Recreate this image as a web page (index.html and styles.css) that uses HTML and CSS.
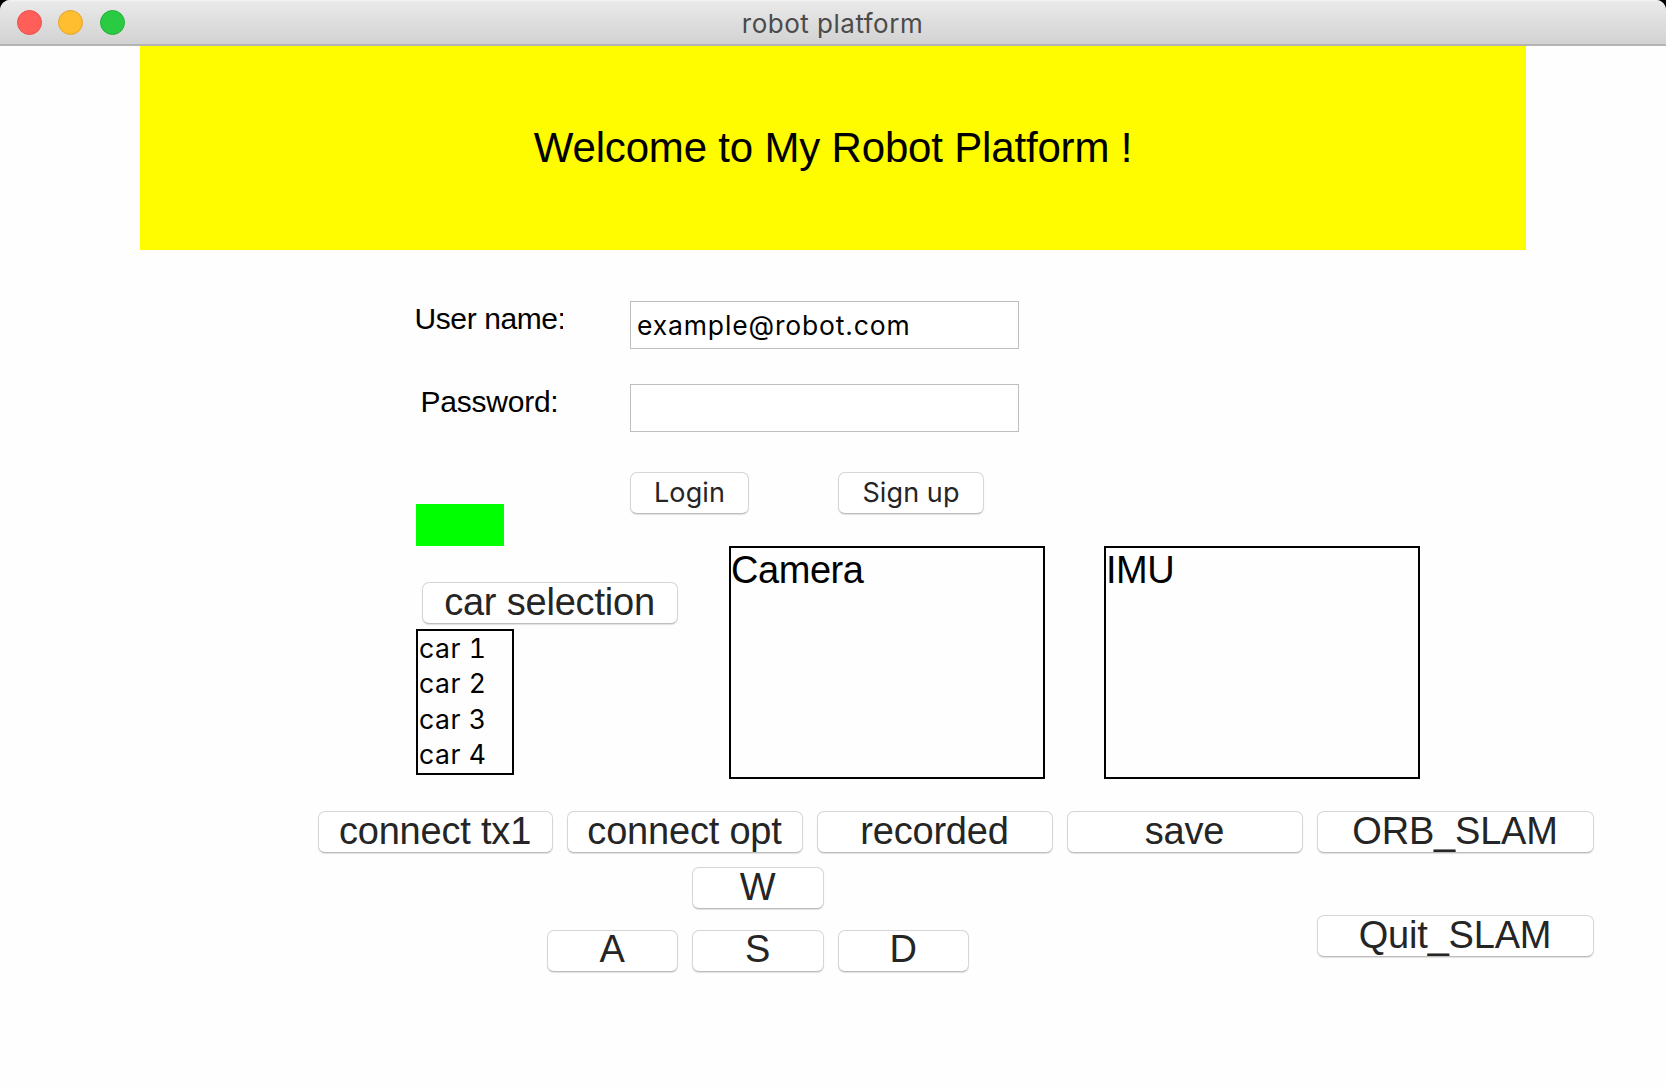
FILE: index.html
```html
<!DOCTYPE html>
<html lang="en">
<head>
<meta charset="utf-8">
<title>robot platform</title>
<link rel="stylesheet" href="styles.css">
</head>
<body>
<div class="window">
  <header class="titlebar">
    <div class="lights">
      <span class="light close"></span>
      <span class="light minimize"></span>
      <span class="light maximize"></span>
    </div>
    <span class="title">robot platform</span>
  </header>
  <h1 class="banner">Welcome to My Robot Platform !</h1>
  <main>
    <section class="upper">
      <div class="side">
        <label class="label user" for="user">User name:</label>
        <label class="label pass" for="pass">Password:</label>
        <div class="status"></div>
        <button class="btn select">car selection</button>
        <ul class="cars">
          <li>car 1</li>
          <li>car 2</li>
          <li>car 3</li>
          <li>car 4</li>
        </ul>
      </div>
      <div class="content">
        <input class="field" id="user" type="text" value="example@robot.com">
        <input class="field" id="pass" type="password">
        <div class="auth">
          <button class="btn small login">Login</button>
          <button class="btn small signup">Sign up</button>
        </div>
        <div class="views">
          <div class="view">Camera</div>
          <div class="view">IMU</div>
        </div>
      </div>
    </section>
    <section class="actions">
      <button class="btn">connect tx1</button>
      <button class="btn">connect opt</button>
      <button class="btn">recorded</button>
      <button class="btn">save</button>
      <button class="btn">ORB_SLAM</button>
    </section>
    <section class="controls">
      <div class="pad">
        <button class="btn up">W</button>
        <button class="btn">A</button>
        <button class="btn">S</button>
        <button class="btn">D</button>
      </div>
      <button class="btn quit">Quit_SLAM</button>
    </section>
  </main>
</div>
</body>
</html>
```
FILE: styles.css
```css
* { box-sizing: border-box; }

body {
  margin: 0;
  background: #000;
  font-family: "Liberation Sans", Arial, sans-serif;
  color: #000;
}

.window {
  width: 1666px;
  height: 1087px;
  overflow: hidden;
  background: #fefefe;
  border-radius: 10px 10px 0 0;
}

.titlebar {
  display: grid;
  grid-template-columns: 1fr auto 1fr;
  align-items: center;
  height: 46px;
  padding-left: 17px;
  background: linear-gradient(#f4f4f4 0, #e9e9e9 2px, #d2d2d2 44px);
  border-bottom: 2px solid #b4b4b4;
}

.lights { display: flex; gap: 16.4px; padding-top: 1px; }

.light {
  width: 25px;
  height: 25px;
  border-radius: 50%;
  border: 1px solid;
}

.close { background: #ff5f58; border-color: #e8504a; }
.minimize { background: #ffbe2f; border-color: #e3a32b; }
.maximize { background: #2aca42; border-color: #21b135; }

.title {
  margin-left: -18px;
  padding-top: 3px;
  font: 26px/32px Inter, sans-serif;
  letter-spacing: 0.5px;
  color: #4b4b4b;
}

.banner {
  display: flex;
  align-items: center;
  justify-content: center;
  width: 1386px;
  height: 204px;
  margin: 0 0 0 140px;
  background: #fffc00;
  font-size: 42px;
  font-weight: 400;
  letter-spacing: -0.18px;
}

.upper { display: flex; padding-left: 416px; }

.side {
  display: flex;
  flex-direction: column;
  align-items: flex-start;
  width: 214px;
  padding-top: 52px;
}

.label {
  width: 147px;
  height: 36px;
  text-align: center;
  white-space: nowrap;
  font-size: 30px;
  line-height: 34px;
  letter-spacing: -0.25px;
}

.user {
  width: 148px;
  margin-left: -1.5px;
  overflow: hidden;
  text-align: left;
  letter-spacing: -0.4px;
}

.pass { margin-top: 47px; }

.status {
  width: 88px;
  height: 42px;
  margin-top: 83px;
  background: #00ff00;
}

.btn {
  flex: none;
  height: 42px;
  padding: 0 1px 3px 0;
  background: #fff;
  border: 1px solid #d6d6d6;
  border-bottom-color: #bdbdbd;
  border-radius: 7px;
  box-shadow: 0 1px 1px rgba(0, 0, 0, 0.12);
  font: 38px/38px "Liberation Sans", Arial, sans-serif;
  letter-spacing: -0.2px;
  color: #252525;
}

.select { width: 256px; margin: 36px 0 0 6px; }

.cars {
  width: 98px;
  height: 146px;
  margin: 5px 0 0;
  padding: 0 0 0 1px;
  border: 2px solid #000;
  list-style: none;
  font: 26.5px/35.4px Inter, sans-serif;
  font-variant-numeric: tabular-nums;
  letter-spacing: 0.6px;
}

.content { padding-top: 51px; }

.field {
  display: block;
  width: 389px;
  height: 48px;
  margin-bottom: 35px;
  padding: 0 0 0 6px;
  background: #fff;
  border: 1px solid #bebebe;
  border-radius: 0;
  font: 26.5px/32px Inter, sans-serif;
  letter-spacing: 0.85px;
  color: #000;
}

.auth { display: flex; gap: 89px; margin-top: 40px; }

.small {
  padding: 0;
  font: 27px/36px Inter, sans-serif;
  letter-spacing: 0.1px;
}

.login { width: 119px; }
.signup { width: 146px; }

.views { display: flex; gap: 59px; margin: 32px 0 0 99px; }

.view {
  width: 316px;
  height: 233px;
  border: 2px solid #000;
  font-size: 38px;
  line-height: 44px;
  letter-spacing: -0.45px;
}

.actions {
  display: grid;
  grid-template-columns: 235px repeat(3, 236px) 277px;
  gap: 14px;
  margin: 32px 0 0 318px;
}

.controls { display: flex; align-items: flex-start; margin: 14px 0 0 547px; }

.pad {
  display: grid;
  grid-template-columns: 131px 132px 131px;
  gap: 21px 14px;
}

.up { grid-column: 2; }
.up + .btn { grid-column: 1; }
.up ~ .btn { padding-bottom: 4px; line-height: 36px; }
.quit { width: 277px; margin: 48px 0 0 348px; }
```
